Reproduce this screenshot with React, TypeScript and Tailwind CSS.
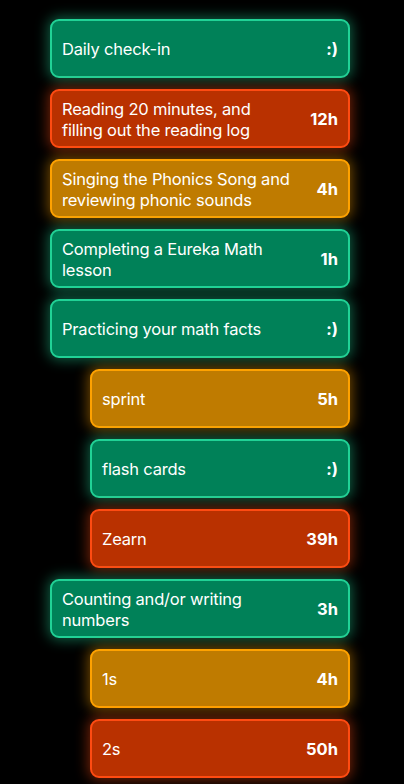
import React from 'react';

type Tone = 'green' | 'red' | 'orange';

const tones: Record<Tone, string> = {
  green: 'bg-[#008158] border-[#21d296] shadow-[0_0_13px_2px_rgba(33,210,150,0.45)]',
  red: 'bg-[#b93100] border-[#ff4b12] shadow-[0_0_13px_2px_rgba(255,75,18,0.45)]',
  orange: 'bg-[#bf7b00] border-[#ffa200] shadow-[0_0_13px_2px_rgba(255,162,0,0.45)]',
};

const tasks: { label: string; value: string; tone: Tone; sub?: boolean }[] = [
  { label: 'Daily check-in', value: ':)', tone: 'green' },
  { label: 'Reading 20 minutes, and filling out the reading log', value: '12h', tone: 'red' },
  { label: 'Singing the Phonics Song and reviewing phonic sounds', value: '4h', tone: 'orange' },
  { label: 'Completing a Eureka Math lesson', value: '1h', tone: 'green' },
  { label: 'Practicing your math facts', value: ':)', tone: 'green' },
  { label: 'sprint', value: '5h', tone: 'orange', sub: true },
  { label: 'flash cards', value: ':)', tone: 'green', sub: true },
  { label: 'Zearn', value: '39h', tone: 'red', sub: true },
  { label: 'Counting and/or writing numbers', value: '3h', tone: 'green' },
  { label: '1s', value: '4h', tone: 'orange', sub: true },
  { label: '2s', value: '50h', tone: 'red', sub: true },
];

const App = () => {
  return (
    <div className="min-h-[784px] bg-black pt-[19px] pb-6 font-['Inter',sans-serif] text-white">
      <div className="ml-[50px] w-[300px] flex flex-col gap-[11px]">
        {tasks.map((t, i) => (
          <div
            key={i}
            className={`h-[59px] flex items-center justify-between rounded-[9px] border-2 pl-[10px] pr-[10px] pt-[2px] ${tones[t.tone]} ${t.sub ? 'ml-[40px]' : ''}`}
          >
            <span className="w-[232px] text-[16.5px] leading-[21px] tracking-[-0.2px]">{t.label}</span>
            <span className="text-[16.5px] font-bold">{t.value}</span>
          </div>
        ))}
      </div>
    </div>
  );
};

export default App;
